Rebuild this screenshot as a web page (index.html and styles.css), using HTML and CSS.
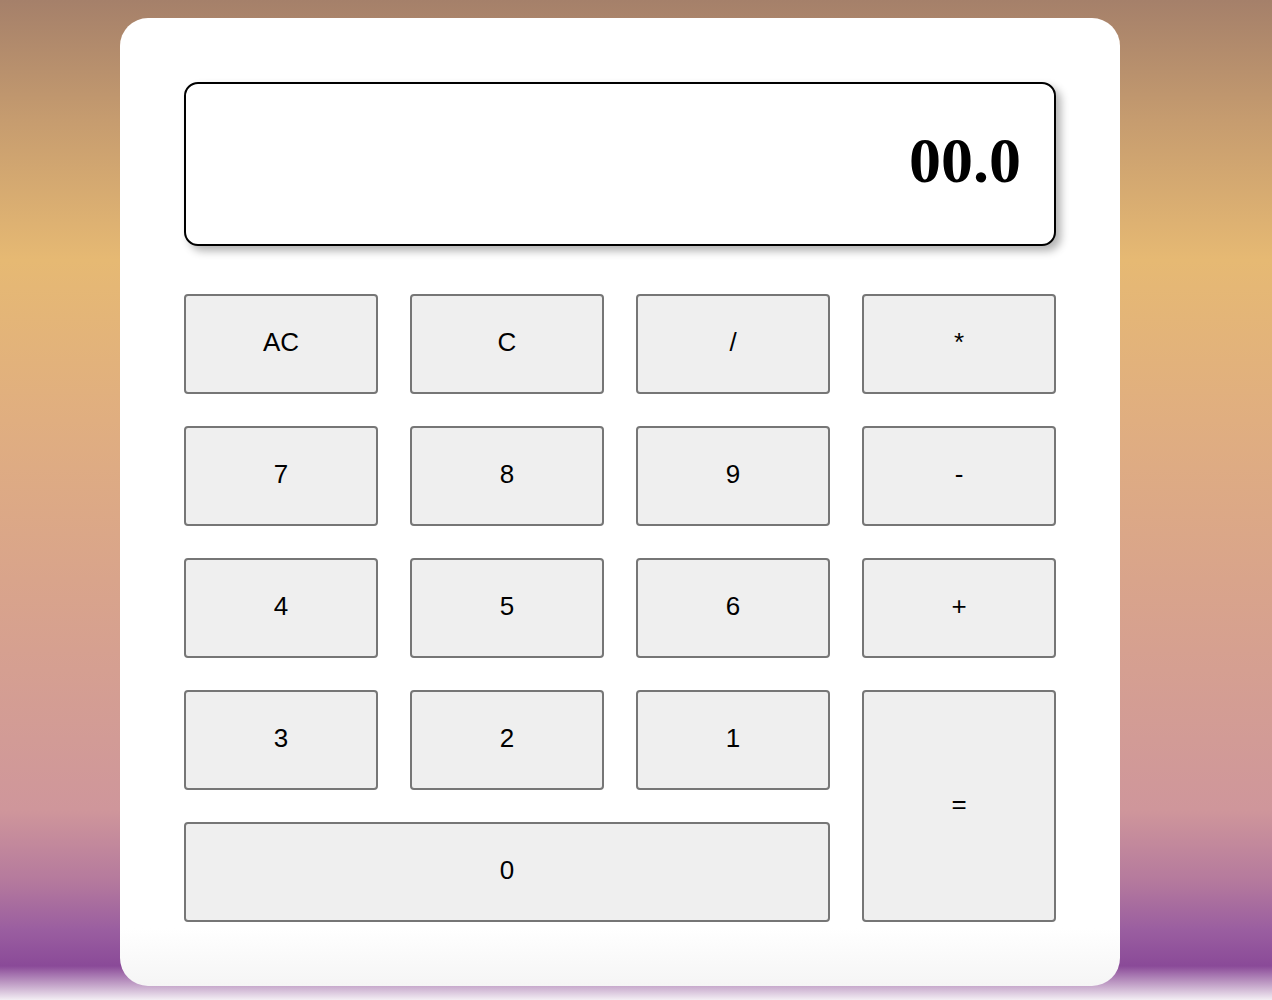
FILE: index.html
```html
<!DOCTYPE html>
<html>
<head>
<meta charset="utf-8">
<title>Calculator</title>
<link rel="stylesheet" href="styles.css">
</head>
<body>
<main class="page">
  <section class="calculator">
    <div class="display">00.0</div>
    <div class="keys">
      <button class="key">AC</button>
      <button class="key">C</button>
      <button class="key">/</button>
      <button class="key">*</button>
      <button class="key">7</button>
      <button class="key">8</button>
      <button class="key">9</button>
      <button class="key">-</button>
      <button class="key">4</button>
      <button class="key">5</button>
      <button class="key">6</button>
      <button class="key">+</button>
      <button class="key">3</button>
      <button class="key">2</button>
      <button class="key">1</button>
      <button class="key key-equals">=</button>
      <button class="key key-zero">0</button>
    </div>
  </section>
</main>
</body>
</html>
```

FILE: styles.css
```css
html, body {
  margin: 0;
  padding: 0;
  height: 100%;
}

body {
  font-family: "Liberation Sans", Arial, sans-serif;
  background: linear-gradient(to bottom,
    #a5806a 0%,
    #c69c6f 12%,
    #e6b973 26%,
    #e0ae80 42%,
    #d9a48b 58%,
    #d29b96 74%,
    #cf969b 81%,
    #b57a9d 88%,
    #9a5ea0 93%,
    #8a4a98 96.6%,
    #c7a9cc 98.6%,
    #f3eef4 100%);
}

.page {
  display: flex;
  padding: 18px 0 0 120px;
}

.calculator {
  width: 1000px;
  box-sizing: border-box;
  padding: 64px;
  border-radius: 28px;
  background: linear-gradient(to bottom, #ffffff 0%, #ffffff 94%, #f5f5f5 100%);
}

.display {
  box-sizing: border-box;
  height: 164px;
  border: 2px solid #000;
  border-radius: 14px;
  background: #fff;
  box-shadow: 5px 5px 8px rgba(0, 0, 0, 0.3);
  display: flex;
  align-items: center;
  justify-content: flex-end;
  padding: 0 33px 7px 0;
  font-family: "Liberation Serif", "Times New Roman", serif;
  font-weight: bold;
  font-size: 64px;
  color: #000;
  margin-bottom: 48px;
}

.keys {
  display: grid;
  grid-template-columns: repeat(4, 194px);
  grid-auto-rows: 100px;
  gap: 32px;
}

.key {
  box-sizing: border-box;
  margin: 0;
  padding: 0 0 4px 0;
  background: #efefef;
  border: 2px solid #767676;
  border-radius: 4px;
  font-family: "Liberation Sans", Arial, sans-serif;
  font-size: 26px;
  color: #000;
}

.key-equals {
  grid-column: 4;
  grid-row: 4 / span 2;
}

.key-zero {
  grid-column: 1 / span 3;
  grid-row: 5;
}
```
